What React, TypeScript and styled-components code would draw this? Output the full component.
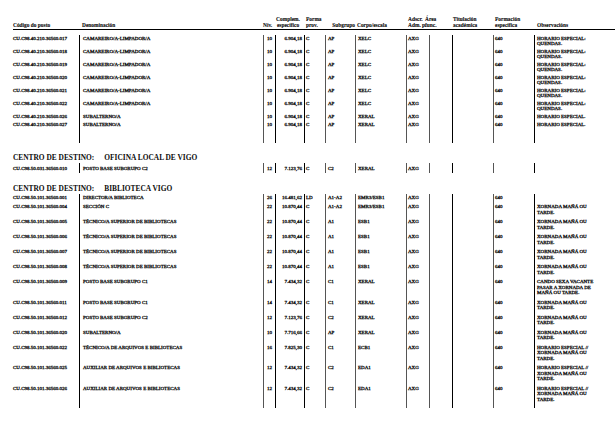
import React from 'react';
import styled, { createGlobalStyle } from 'styled-components';

type Line = 'dark' | 'grey' | 'none';

interface ColSpec {
  w: number;
  line: Line;
  align?: 'left' | 'center' | 'right';
  pl?: number;
  pr?: number;
}

// column edges taken from the scan: 13 | 79 | 263 | 275 | 304 | 325 | 355 | 406 | 429 | 452 | 493 | 534 | 610
const cols: ColSpec[] = [
  { w: 66, line: 'none' },
  { w: 184, line: 'dark', pl: 3 },
  { w: 12, line: 'grey', align: 'center' },
  { w: 29, line: 'dark', align: 'right', pr: 2 },
  { w: 21, line: 'dark', pl: 1 },
  { w: 30, line: 'grey', pl: 2 },
  { w: 51, line: 'grey', pl: 2 },
  { w: 23, line: 'grey', pl: 1 },
  { w: 23, line: 'grey' },
  { w: 41, line: 'dark' },
  { w: 41, line: 'grey', pl: 1 },
  { w: 76, line: 'dark', pl: 2 },
];

const template = cols.map((c) => `${c.w}px`).join(' ');

interface Post {
  code: string;
  name: string;
  niv: string;
  comp: string;
  forma: string;
  sub: string;
  corpo: string;
  form: string;
  obs: string[];
}

const post = (
  code: string,
  name: string,
  niv: string,
  comp: string,
  forma: string,
  sub: string,
  corpo: string,
  form: string,
  obs: string[]
): Post => ({ code, name, niv, comp, forma, sub, corpo, form, obs });

const quendas = ['HORARIO ESPECIAL:', 'QUENDAS.'];
const xornada = ['XORNADA MAÑÁ OU', 'TARDE.'];
const especialXornada = ['HORARIO ESPECIAL //', 'XORNADA MAÑÁ OU', 'TARDE.'];

const camareiros: Post[] = ['017', '018', '019', '020', '021', '022'].map((n) =>
  post(`CU.C98.40.210.36560.${n}`, 'CAMAREIRO/A-LIMPADOR/A', '10', '6.904,18', 'C', 'AP', 'XELC', '640', quendas)
);

const firstBlock: Post[] = [
  ...camareiros,
  post('CU.C98.40.210.36560.026', 'SUBALTERNO/A', '10', '6.904,18', 'C', 'AP', 'XERAL', '640', ['HORARIO ESPECIAL.']),
  post('CU.C98.40.210.36560.027', 'SUBALTERNO/A', '10', '6.904,18', 'C', 'AP', 'XERAL', '640', ['HORARIO ESPECIAL.']),
];

const oficina: Post[] = [
  post('CU.C98.50.031.36560.010', 'POSTO BASE SUBGRUPO C2', '12', '7.123,76', 'C', 'C2', 'XERAL', '', []),
];

const tecnicos: Post[] = ['005', '006', '007', '008'].map((n) =>
  post(`CU.C98.50.101.36560.${n}`, 'TÉCNICO/A SUPERIOR DE BIBLIOTECAS', '22', '10.870,44', 'C', 'A1', 'ESB1', '640', xornada)
);

const biblioteca: Post[] = [
  post('CU.C98.50.101.36560.001', 'DIRECTOR/A BIBLIOTECA', '26', '16.481,62', 'LD', 'A1-A2', 'EMR3/ESB1', '640', []),
  post('CU.C98.50.101.36560.004', 'SECCIÓN C', '22', '10.870,44', 'C', 'A1-A2', 'EMR3/ESB1', '640', xornada),
  ...tecnicos,
  post('CU.C98.50.101.36560.009', 'POSTO BASE SUBGRUPO C1', '14', '7.434,32', 'C', 'C1', 'XERAL', '640', [
    'CANDO SEXA VACANTE',
    'PASAR A XORNADA DE',
    'MAÑÁ OU TARDE.',
  ]),
  post('CU.C98.50.101.36560.011', 'POSTO BASE SUBGRUPO C1', '14', '7.434,32', 'C', 'C1', 'XERAL', '640', xornada),
  post('CU.C98.50.101.36560.012', 'POSTO BASE SUBGRUPO C2', '12', '7.123,76', 'C', 'C2', 'XERAL', '640', xornada),
  post('CU.C98.50.101.36560.020', 'SUBALTERNO/A', '10', '7.716,66', 'C', 'AP', 'XERAL', '640', xornada),
  post('CU.C98.50.101.36560.022', 'TÉCNICO/A DE ARQUIVOS E BIBLIOTECAS', '16', '7.825,30', 'C', 'C1', 'ECB1', '640', especialXornada),
  post('CU.C98.50.101.36560.025', 'AUXILIAR DE ARQUIVOS E BIBLIOTECAS', '12', '7.434,32', 'C', 'C2', 'EDA1', '640', especialXornada),
  post('CU.C98.50.101.36560.026', 'AUXILIAR DE ARQUIVOS E BIBLIOTECAS', '12', '7.434,32', 'C', 'C2', 'EDA1', '640', especialXornada),
];

const GlobalStyle = createGlobalStyle`
  html, body {
    margin: 0;
    padding: 0;
    background: #ffffff;
  }

  body {
    font-family: "Liberation Serif", "Times New Roman", serif;
    color: #0d0d0d;
  }
`;

const Page = styled.div`
  width: 615px;
  height: 439px;
  box-sizing: border-box;
  padding: 16px 0 0 13px;
  overflow: hidden;
`;

const HeaderRow = styled.div`
  display: grid;
  grid-template-columns: ${template};
  font-size: 5.4px;
  font-weight: 700;
  line-height: 6px;
  padding-bottom: 1px;
  border-bottom: 1px solid #000000;
  white-space: nowrap;
  -webkit-text-stroke: 0.1px #0d0d0d;
`;

const HeadCell = styled.div<{ $align?: string; $pl?: number; $pr?: number; $shift?: number }>`
  display: flex;
  flex-direction: column;
  justify-content: flex-end;
  align-items: ${(p) => (p.$align === 'right' ? 'flex-end' : p.$align === 'center' ? 'center' : 'flex-start')};
  padding-left: ${(p) => p.$pl ?? 0}px;
  padding-right: ${(p) => p.$pr ?? 0}px;
  margin-left: ${(p) => p.$shift ?? 0}px;
`;

const Table = styled.div<{ $gap: number }>`
  margin-top: ${(p) => p.$gap}px;
`;

const Row = styled.div<{ $lh: number; $top: number; $bottom: number; $min?: number }>`
  display: grid;
  grid-template-columns: ${template};
  font-size: 5px;
  line-height: ${(p) => p.$lh}px;
  min-height: ${(p) => p.$min ?? 0}px;
  -webkit-text-stroke: 0.3px #0d0d0d;

  & > div {
    padding-top: ${(p) => p.$top}px;
    padding-bottom: ${(p) => p.$bottom}px;
  }
`;

const Cell = styled.div<{ $line: Line; $align?: string; $pl?: number; $pr?: number }>`
  box-sizing: border-box;
  border-left: ${(p) =>
    p.$line === 'dark' ? '1px solid #000000' : p.$line === 'grey' ? '1.5px solid #555555' : 'none'};
  text-align: ${(p) => p.$align ?? 'left'};
  padding-left: ${(p) => p.$pl ?? 0}px;
  padding-right: ${(p) => p.$pr ?? 0}px;
  white-space: nowrap;
`;

const SectionTitle = styled.div<{ $gap: number }>`
  display: flex;
  gap: 10px;
  margin-top: ${(p) => p.$gap}px;
  font-size: 7.4px;
  font-weight: 700;
  line-height: 8px;
  white-space: nowrap;
`;

interface RowLook {
  lh: number;
  top: number;
  bottom: number;
}

const PostRow: React.FC<{ p: Post; look: RowLook }> = ({ p, look }) => {
  const values: React.ReactNode[] = [
    p.code,
    p.name,
    p.niv,
    p.comp,
    p.forma,
    p.sub,
    p.corpo,
    'AXG',
    '',
    '',
    p.form,
    p.obs.map((o, i) => <div key={i}>{o}</div>),
  ];
  return (
    <Row $lh={look.lh} $top={look.top} $bottom={look.bottom}>
      {cols.map((c, i) => (
        <Cell key={i} $line={c.line} $align={c.align} $pl={c.pl} $pr={c.pr}>
          {values[i]}
        </Cell>
      ))}
    </Row>
  );
};

const Tail: React.FC<{ height: number }> = ({ height }) => (
  <Row $lh={5} $top={0} $bottom={0} $min={height}>
    {cols.map((c, i) => (
      <Cell key={i} $line={c.line} />
    ))}
  </Row>
);

const Block: React.FC<{ posts: Post[]; look: RowLook; gap: number; tail: number }> = ({
  posts,
  look,
  gap,
  tail,
}) => (
  <Table $gap={gap}>
    {posts.map((p) => (
      <PostRow key={p.code} p={p} look={look} />
    ))}
    {tail > 0 && <Tail height={tail} />}
  </Table>
);

const Header: React.FC = () => (
  <HeaderRow>
    <HeadCell>Código do posto</HeadCell>
    <HeadCell $pl={3}>Denominación</HeadCell>
    <HeadCell>Nív.</HeadCell>
    <HeadCell $align="center" $pr={3}>
      <span>Complem.</span>
      <span>específico</span>
    </HeadCell>
    <HeadCell $pl={2}>
      <span>Forma</span>
      <span>prov.</span>
    </HeadCell>
    <HeadCell $align="right">Subgrupo</HeadCell>
    <HeadCell $pl={2}>Corpo/escala</HeadCell>
    <HeadCell $pl={2}>
      <span>Adscr.</span>
      <span>Adm. p.</span>
    </HeadCell>
    <HeadCell $shift={-4}>
      <span>Área</span>
      <span>func.</span>
    </HeadCell>
    <HeadCell $pl={1}>
      <span>Titulación</span>
      <span>académica</span>
    </HeadCell>
    <HeadCell $pl={2}>
      <span>Formación</span>
      <span>específica</span>
    </HeadCell>
    <HeadCell $pl={3}>Observacións</HeadCell>
  </HeaderRow>
);

export default function App() {
  return (
    <>
      <GlobalStyle />
      <Page>
        <Header />
        <Block posts={firstBlock} look={{ lh: 5, top: 0.5, bottom: 2.5 }} gap={5} tail={14} />

        <SectionTitle $gap={11}>
          <span>CENTRO DE DESTINO:</span>
          <span>OFICINA LOCAL DE VIGO</span>
        </SectionTitle>
        <Block posts={oficina} look={{ lh: 5, top: 2.5, bottom: 2.5 }} gap={1} tail={0} />

        <SectionTitle $gap={12}>
          <span>CENTRO DE DESTINO:</span>
          <span>BIBLIOTECA VIGO</span>
        </SectionTitle>
        <Block posts={biblioteca} look={{ lh: 5.5, top: 0.5, bottom: 3.5 }} gap={1} tail={2.5} />
      </Page>
    </>
  );
}
